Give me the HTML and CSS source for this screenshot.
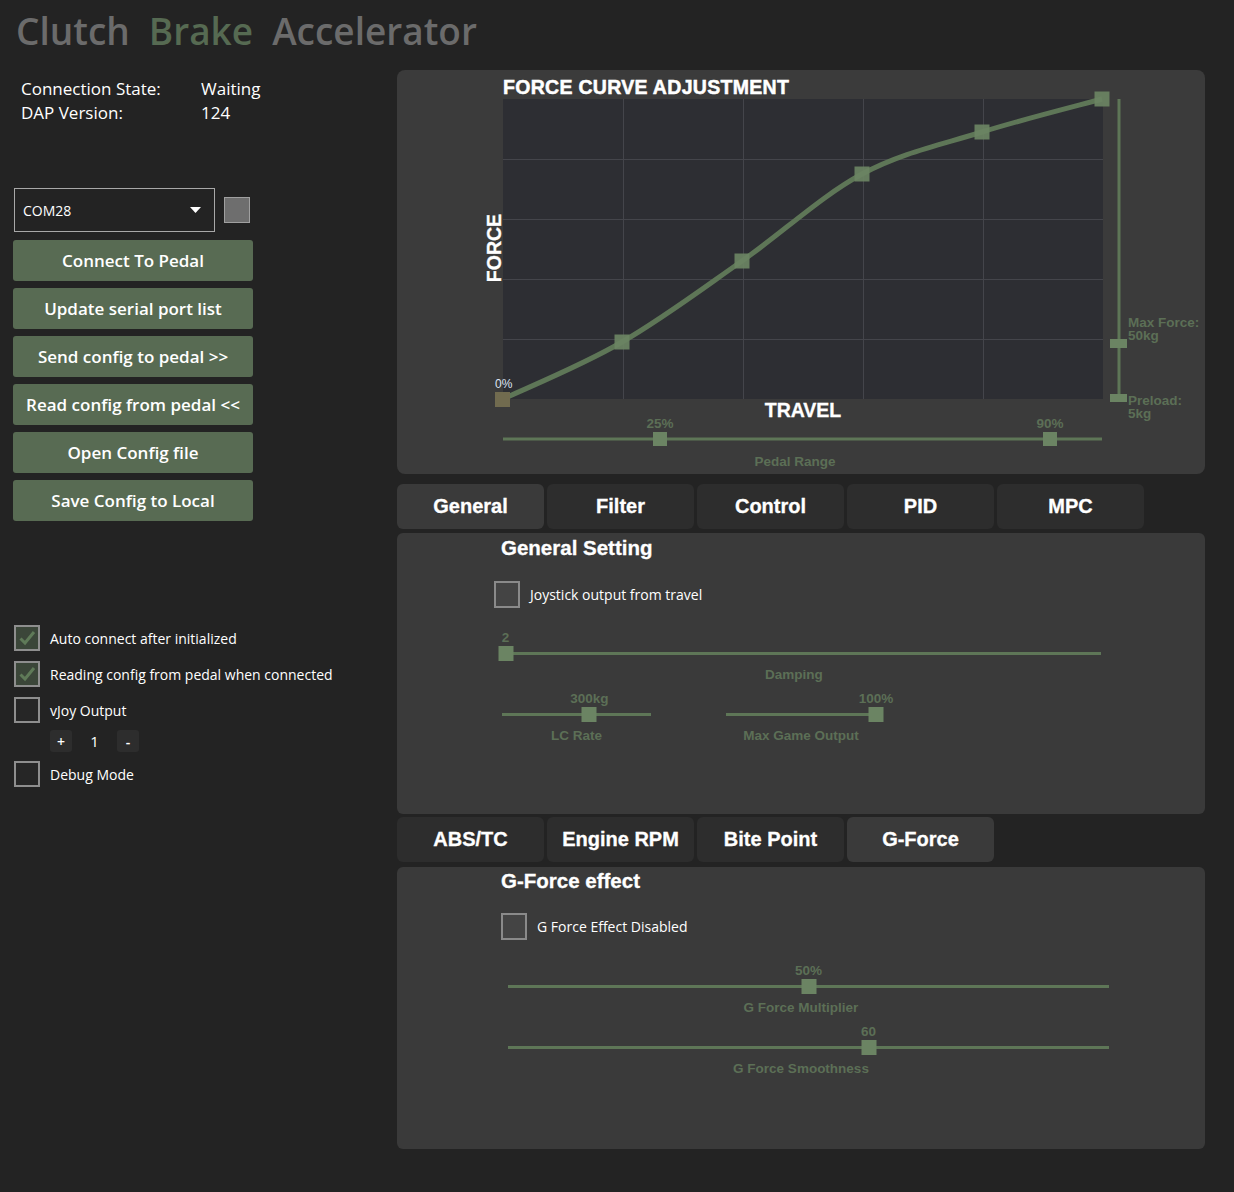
FILE: index.html
```html
<!DOCTYPE html>
<html>
<head>
<meta charset="utf-8">
<title>Pedal</title>
<link rel="stylesheet" href="styles.css">
</head>
<body>
<header class="title"><span class="t-gray">Clutch</span><span class="t-green">Brake</span><span class="t-gray">Accelerator</span></header>
<div class="main">
  <aside class="left">
    <div class="info">
      <span>Connection State:</span><span>Waiting</span>
      <span>DAP Version:</span><span>124</span>
    </div>
    <div class="port-row">
      <div class="combo"><span>COM28</span><svg class="combo-arrow" width="11" height="6" viewBox="0 0 11 6"><path d="M0 0H11L5.5 6Z" fill="#ffffff"/></svg></div>
      <div class="swatch"></div>
    </div>
    <div class="buttons">
      <button class="btn">Connect To Pedal</button>
      <button class="btn">Update serial port list</button>
      <button class="btn">Send config to pedal &gt;&gt;</button>
      <button class="btn">Read config from pedal &lt;&lt;</button>
      <button class="btn">Open Config file</button>
      <button class="btn">Save Config to Local</button>
    </div>
    <div class="checks">
      <div class="check-row"><span class="cb checked"><svg width="22" height="22" viewBox="0 0 22 22"><path d="M4.5 11.5L9 16L18 5" fill="none" stroke="#5f7a58" stroke-width="3"/></svg></span><span>Auto connect after initialized</span></div>
      <div class="check-row"><span class="cb checked"><svg width="22" height="22" viewBox="0 0 22 22"><path d="M4.5 11.5L9 16L18 5" fill="none" stroke="#5f7a58" stroke-width="3"/></svg></span><span>Reading config from pedal when connected</span></div>
      <div class="check-row"><span class="cb"></span><span>vJoy Output</span></div>
      <div class="stepper"><span class="step-btn">+</span><span class="step-val">1</span><span class="step-btn">-</span></div>
      <div class="check-row debug"><span class="cb"></span><span>Debug Mode</span></div>
    </div>
  </aside>
  <section class="right">
    <div class="chart-panel">
      <svg class="chart" width="808" height="404" viewBox="0 0 808 404">
        <text x="106" y="24" class="c-title">FORCE CURVE ADJUSTMENT</text>
        <rect x="106" y="29" width="600" height="300" fill="#2d2e33"/>
        <g stroke="#44454b" stroke-width="1">
          <line x1="226.5" y1="29" x2="226.5" y2="329"/>
          <line x1="346.5" y1="29" x2="346.5" y2="329"/>
          <line x1="466.5" y1="29" x2="466.5" y2="329"/>
          <line x1="586.5" y1="29" x2="586.5" y2="329"/>
          <line x1="106" y1="89.5" x2="706" y2="89.5"/>
          <line x1="106" y1="149.5" x2="706" y2="149.5"/>
          <line x1="106" y1="209.5" x2="706" y2="209.5"/>
          <line x1="106" y1="269.5" x2="706" y2="269.5"/>
        </g>
        <text class="c-axis" transform="translate(104 178) rotate(-90)" text-anchor="middle">FORCE</text>
        <path d="M106 329 C126 319.5 186 295 225 272 C265 249 305 219 345 191 C385 163 425 125.5 465 104 C505 82.5 545 74.5 585 62 C625 49.5 685 34.5 705 29" fill="none" stroke="#5e7657" stroke-width="5"/>
        <g fill="#6b8463" fill-opacity="0.92">
          <rect x="217.5" y="264.5" width="15" height="15"/>
          <rect x="337.5" y="183.5" width="15" height="15"/>
          <rect x="457.5" y="96.5" width="15" height="15"/>
          <rect x="577.5" y="54.5" width="15" height="15"/>
          <rect x="697.5" y="21.5" width="15" height="15"/>
        </g>
        <rect x="98" y="322" width="15" height="15" fill="#716b4f"/>
        <text x="98" y="318" class="c-zero">0%</text>
        <line x1="722" y1="29" x2="722" y2="328" stroke="#5e7657" stroke-width="3"/>
        <rect x="713" y="269" width="17" height="9" fill="#6b8463"/>
        <rect x="713" y="324" width="17" height="8" fill="#6b8463"/>
        <text x="731" y="257" class="c-green">Max Force:</text>
        <text x="731" y="270" class="c-green">50kg</text>
        <text x="731" y="335" class="c-green">Preload:</text>
        <text x="731" y="348" class="c-green">5kg</text>
        <text x="406" y="347" class="c-axis" text-anchor="middle">TRAVEL</text>
        <line x1="106" y1="369" x2="705" y2="369" stroke="#5e7657" stroke-width="3"/>
        <rect x="256" y="362" width="14" height="14" fill="#6b8463"/>
        <rect x="646" y="362" width="14" height="14" fill="#6b8463"/>
        <text x="263" y="358" class="c-green" text-anchor="middle">25%</text>
        <text x="653" y="358" class="c-green" text-anchor="middle">90%</text>
        <text x="398" y="396" class="c-green" text-anchor="middle">Pedal Range</text>
      </svg>
    </div>
    <nav class="tabs">
      <span class="tab active">General</span>
      <span class="tab">Filter</span>
      <span class="tab">Control</span>
      <span class="tab">PID</span>
      <span class="tab">MPC</span>
    </nav>
    <div class="panel general">
      <h2 class="panel-title">General Setting</h2>
      <div class="p-check"><span class="pcb"></span><span>Joystick output from travel</span></div>
      <div class="slider wide damping">
        <div class="s-val"><span style="left:0.6%">2</span></div>
        <div class="s-track"><span class="s-thumb" style="left:0.6%"></span></div>
        <div class="s-label">Damping</div>
      </div>
      <div class="slider-row">
        <div class="slider lc">
          <div class="s-val"><span style="left:58.7%">300kg</span></div>
          <div class="s-track"><span class="s-thumb" style="left:58.7%"></span></div>
          <div class="s-label">LC Rate</div>
        </div>
        <div class="slider mgo">
          <div class="s-val"><span style="left:100%">100%</span></div>
          <div class="s-track"><span class="s-thumb" style="left:100%"></span></div>
          <div class="s-label">Max Game Output</div>
        </div>
      </div>
    </div>
    <nav class="tabs tabs2">
      <span class="tab">ABS/TC</span>
      <span class="tab">Engine RPM</span>
      <span class="tab">Bite Point</span>
      <span class="tab active">G-Force</span>
    </nav>
    <div class="panel gforce">
      <h2 class="panel-title">G-Force effect</h2>
      <div class="p-check"><span class="pcb"></span><span>G Force Effect Disabled</span></div>
      <div class="slider wide g1">
        <div class="s-val"><span style="left:50%">50%</span></div>
        <div class="s-track"><span class="s-thumb" style="left:50%"></span></div>
        <div class="s-label">G Force Multiplier</div>
      </div>
      <div class="slider wide g2">
        <div class="s-val"><span style="left:60%">60</span></div>
        <div class="s-track"><span class="s-thumb" style="left:60%"></span></div>
        <div class="s-label">G Force Smoothness</div>
      </div>
    </div>
  </section>
</div>
</body>
</html>
```
FILE: styles.css
```css
* { box-sizing: border-box; }
html, body { margin: 0; padding: 0; }
body {
  background: #232323;
  width: 1234px;
  height: 1192px;
  overflow: hidden;
  font-family: "Open Sans", "Noto Sans", sans-serif;
  color: #ffffff;
}
.title {
  height: 70px;
  padding: 6px 0 0 16px;
  font-size: 37px;
  font-weight: 600;
  line-height: 50px;
  white-space: nowrap;
}
.title span { margin-right: 19px; }
.t-gray { color: #6b6b6b; }
.t-green { color: #566a52; }

.main {
  display: grid;
  grid-template-columns: 397px 808px;
}
.left { display: flex; flex-direction: column; }
.info {
  display: grid;
  grid-template-columns: 180px auto;
  padding: 7px 0 0 21px;
  font-size: 17px;
  line-height: 24px;
}
.port-row {
  display: flex;
  align-items: center;
  margin-top: 63px;
  padding-left: 14px;
}
.combo {
  width: 201px;
  height: 44px;
  border: 1px solid #a8a8a8;
  display: flex;
  align-items: center;
  justify-content: space-between;
  padding: 0 13px 0 8px;
  font-size: 14px;
}
.combo-arrow { display: block; }
.swatch {
  margin-left: 9px;
  width: 26px;
  height: 26px;
  background: #6e6e6e;
  border: 1px solid #a0a0a0;
}
.buttons {
  display: flex;
  flex-direction: column;
  gap: 7px;
  margin-top: 8px;
  padding-left: 13px;
}
.btn {
  width: 240px;
  height: 41px;
  border: none;
  border-radius: 3px;
  background: #586b53;
  color: #ffffff;
  font-family: "Open Sans", "Noto Sans", sans-serif;
  font-size: 17px;
  font-weight: 600;
  padding: 0;
}
.checks {
  margin-top: 104px;
  padding-left: 14px;
  display: flex;
  flex-direction: column;
}
.check-row {
  display: flex;
  align-items: center;
  gap: 10px;
  height: 26px;
  margin-bottom: 10px;
  font-size: 14px;
}
.cb {
  width: 26px;
  height: 26px;
  border: 2px solid #8e8e8e;
  background: #262626;
  display: flex;
  align-items: center;
  justify-content: center;
  flex: none;
}
.cb.checked { background: #3b4639; }
.stepper {
  display: flex;
  align-items: center;
  margin: -3px 0 9px 36px;
  height: 22px;
}
.step-btn {
  width: 22px;
  height: 22px;
  border-radius: 3px;
  background: #2d2d2d;
  font-size: 14px;
  font-weight: 600;
  display: flex;
  align-items: center;
  justify-content: center;
}
.step-val {
  width: 45px;
  text-align: center;
  font-size: 15px;
}

.right { display: flex; flex-direction: column; }
.chart-panel {
  width: 808px;
  height: 404px;
  background: #3b3b3b;
  border-radius: 8px;
  overflow: hidden;
}
.chart { display: block; }
.c-title { font-family: "Liberation Sans", Arial, sans-serif; font-weight: bold; font-size: 19.5px; fill: #ffffff; stroke: #ffffff; stroke-width: 0.5px; letter-spacing: 0.3px; }
.c-axis { font-family: "Liberation Sans", Arial, sans-serif; font-weight: bold; font-size: 19.5px; fill: #ffffff; stroke: #ffffff; stroke-width: 0.3px; }
.c-zero { font-family: "Liberation Sans", Arial, sans-serif; font-size: 12px; fill: #dde3f2; }
.c-green { font-family: "Liberation Sans", Arial, sans-serif; font-weight: bold; font-size: 13.5px; fill: #5c6f56; }

.tabs {
  display: flex;
  gap: 3px;
  margin-top: 10px;
  height: 45px;
}
.tabs2 { margin-top: 3px; }
.tab {
  width: 147px;
  height: 45px;
  border-radius: 6px;
  background: #2d2d2d;
  display: flex;
  align-items: center;
  justify-content: center;
  font-family: "Liberation Sans", Arial, sans-serif;
  font-weight: bold;
  font-size: 20px;
  -webkit-text-stroke: 0.3px #ffffff;
}
.tab.active { background: #3a3a3a; }
.panel {
  margin-top: 4px;
  height: 281px;
  background: #3a3a3a;
  border-radius: 6px;
  padding: 3px 0 0 97px;
}
.panel.gforce { margin-top: 5px; height: 282px; padding-top: 2px; }
.panel-title {
  margin: 0 0 0 7px;
  font-family: "Liberation Sans", Arial, sans-serif;
  font-weight: bold;
  font-size: 20.5px;
  line-height: 24px;
  -webkit-text-stroke: 0.3px #ffffff;
}
.p-check {
  display: flex;
  align-items: center;
  gap: 10px;
  margin-top: 21px;
  height: 27px;
  font-size: 14px;
}
.gforce .p-check { margin-left: 7px; margin-top: 20px; }
.pcb {
  width: 26px;
  height: 27px;
  border: 2px solid #8a8a8a;
  background: #444444;
  flex: none;
}

.slider { font-family: "Liberation Sans", Arial, sans-serif; font-weight: bold; font-size: 13.5px; color: #5c6f56; }
.s-val { position: relative; height: 16px; line-height: 16px; }
.s-val span { position: absolute; top: 0; transform: translateX(-50%); white-space: nowrap; }
.s-track { position: relative; height: 3px; margin-top: 6px; background: #5e7657; }
.s-thumb {
  position: absolute;
  top: -6px;
  width: 15px;
  height: 15px;
  transform: translateX(-50%);
  background: #6b8463;
}
.s-label { margin-top: 12px; height: 16px; line-height: 16px; text-align: center; white-space: nowrap; }
.wide .s-label { padding-right: 15px; }
.damping { margin: 22px 0 0 8px; width: 599px; }
.slider-row { display: flex; gap: 75px; margin: 8px 0 0 8px; }
.lc { width: 149px; }
.mgo { width: 150px; }
.g1 { margin: 23px 0 0 14px; width: 601px; }
.g2 { margin: 8px 0 0 14px; width: 601px; }
```
